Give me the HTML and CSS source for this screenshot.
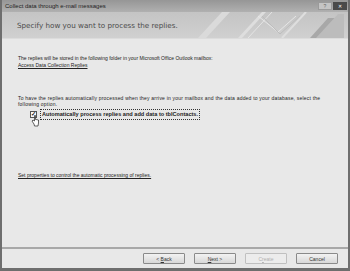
FILE: index.html
```html
<!DOCTYPE html>
<html lang="en">
<head>
  <meta charset="UTF-8">
  <title>Collect data through e-mail messages</title>
  <link rel="stylesheet" href="styles.css">
</head>
<body>
  <div class="window">
    <div class="titlebar">
      <span class="caption">Collect data through e-mail messages</span>
      <div class="caption-btns">
        <span class="cbtn help">?</span>
        <span class="cbtn close">&#x2715;</span>
      </div>
    </div>

    <div class="banner">
      <h1>Specify how you want to process the replies.</h1>
      <svg class="deco" width="170" height="26" viewBox="0 0 170 26">
        <polygon points="20,26 44,0 52,0 28,26" fill="#dadada"/>
        <polygon points="60,26 84,0 88,0 64,26" fill="#dedede"/>
        <line x1="70" y1="26" x2="94" y2="0" stroke="#e4e4e4" stroke-width="1"/>
        <polyline points="80,4 100,20 118,4" fill="none" stroke="#e6e6e6" stroke-width="1"/>
        <polyline points="84,4 102,22 122,4" fill="none" stroke="#bdbdbd" stroke-width="1"/>
        <polygon points="132,26 150,6 162,6 162,26" fill="#a8a8a8"/>
        <polygon points="138,26 160,2 166,2 166,26" fill="#bcbcbc"/>
        <line x1="104" y1="26" x2="128" y2="0" stroke="#dedede" stroke-width="2"/>
      </svg>
    </div>

    <div class="content">
      <p class="note">The replies will be stored in the following folder in your Microsoft Office Outlook mailbox:</p>
      <a class="link" href="#">Access Data Collection Replies</a>

      <p class="note para2">To have the replies automatically processed when they arrive in your mailbox and the data added to your database, select the following option.</p>

      <div class="check-row">
        <span class="checkbox">&#x2713;</span>
        <span class="check-label">Automatically process replies and add data to tblContacts.</span>
        <svg class="cursor" width="8" height="12" viewBox="0 0 8 12">
          <path d="M3.5 0.5 L3.5 6 L2 5 L1 6 L3 9 L3.5 11 L7 11 L7.5 8 L7.5 5 L5 4.5 L4.5 4.5 L4.5 0.5 Z" fill="#fff" stroke="#222" stroke-width="0.7"/>
        </svg>
      </div>

      <a class="link link2" href="#">Set properties to control the automatic processing of replies.</a>
    </div>

    <div class="footer">
      <button class="btn" type="button">&lt; <u>B</u>ack</button>
      <button class="btn" type="button"><u>N</u>ext &gt;</button>
      <button class="btn" type="button" disabled>C<u>r</u>eate</button>
      <button class="btn" type="button">Cancel</button>
    </div>
  </div>
</body>
</html>
```

FILE: styles.css
```css
body {
  margin: 0;
  font-family: 'Liberation Sans', Arial, sans-serif;
  background: #fff;
}
.window {
  width: 350px;
  height: 271px;
  box-sizing: border-box;
  border: 2px solid #6e6e6e;
  border-top: none;
  border-bottom-width: 3px;
  background: #e8e8e8;
  display: flex;
  flex-direction: column;
}
.titlebar {
  height: 12px;
  background: linear-gradient(#969696, #b0b0b0);
  display: flex;
  align-items: center;
  justify-content: space-between;
  padding-left: 3px;
}
.caption {
  font-size: 6px;
  color: #222;
}
.caption-btns {
  display: flex;
  gap: 1px;
  padding-right: 1px;
}
.cbtn {
  height: 8px;
  font-size: 5px;
  line-height: 8px;
  text-align: center;
  color: #fff;
}
.help {
  width: 12px;
  background: #c4c4c4;
  border: 1px solid #9a9a9a;
  height: 6px;
  line-height: 6px;
  color: #666;
}
.close {
  width: 14px;
  background: #4a4a4a;
}
.banner {
  position: relative;
  height: 26px;
  background: linear-gradient(#c4c4c4, #d0d0d0);
  border-bottom: 1px solid #dcdcdc;
  overflow: hidden;
}
.banner h1 {
  margin: 0;
  padding: 9px 0 0 15px;
  font-family: 'DejaVu Sans', Verdana, sans-serif;
  font-size: 7.2px;
  font-weight: normal;
  color: #4a4a4a;
  position: relative;
  z-index: 1;
}
.deco {
  position: absolute;
  right: 0;
  top: 0;
}
.content {
  flex: 1;
  padding: 16px 0 0 16px;
  border-bottom: 2px solid #a8a8a8;
  font-size: 5px;
  line-height: 6px;
  color: #222;
}
.note {
  margin: 0;
  width: 310px;
}
.link {
  display: block;
  color: #222;
  margin-top: 1px;
}
.para2 {
  margin-top: 27px;
  width: 312px;
  letter-spacing: 0.2px;
}
.check-row {
  position: relative;
  display: flex;
  align-items: center;
  gap: 3px;
  margin: 2px 0 0 12px;
}
.checkbox {
  width: 5px;
  height: 5px;
  border: 1px solid #555;
  background: #f8f8f8;
  font-size: 6px;
  line-height: 5px;
  font-weight: bold;
  text-align: center;
  color: #222;
}
.check-label {
  font-weight: bold;
  font-size: 5.6px;
  line-height: 7px;
  padding: 1px 1px;
  border: 1px dotted #333;
}
.cursor {
  position: absolute;
  left: 1px;
  top: 6px;
}
.link2 {
  margin-top: 52px;
}
.footer {
  height: 19px;
  display: flex;
  align-items: center;
  justify-content: flex-end;
  gap: 9px;
  padding-right: 10px;
}
.btn {
  width: 42px;
  height: 11px;
  padding: 0;
  font-family: 'Liberation Sans', Arial, sans-serif;
  font-size: 5px;
  color: #333;
  background: linear-gradient(#f2f2f2, #d8d8d8);
  border: 1px solid #8a8a8a;
  border-radius: 1px;
}
.btn:disabled {
  color: #b0b0b0;
  background: #ececec;
  border-color: #c0c0c0;
}
```
